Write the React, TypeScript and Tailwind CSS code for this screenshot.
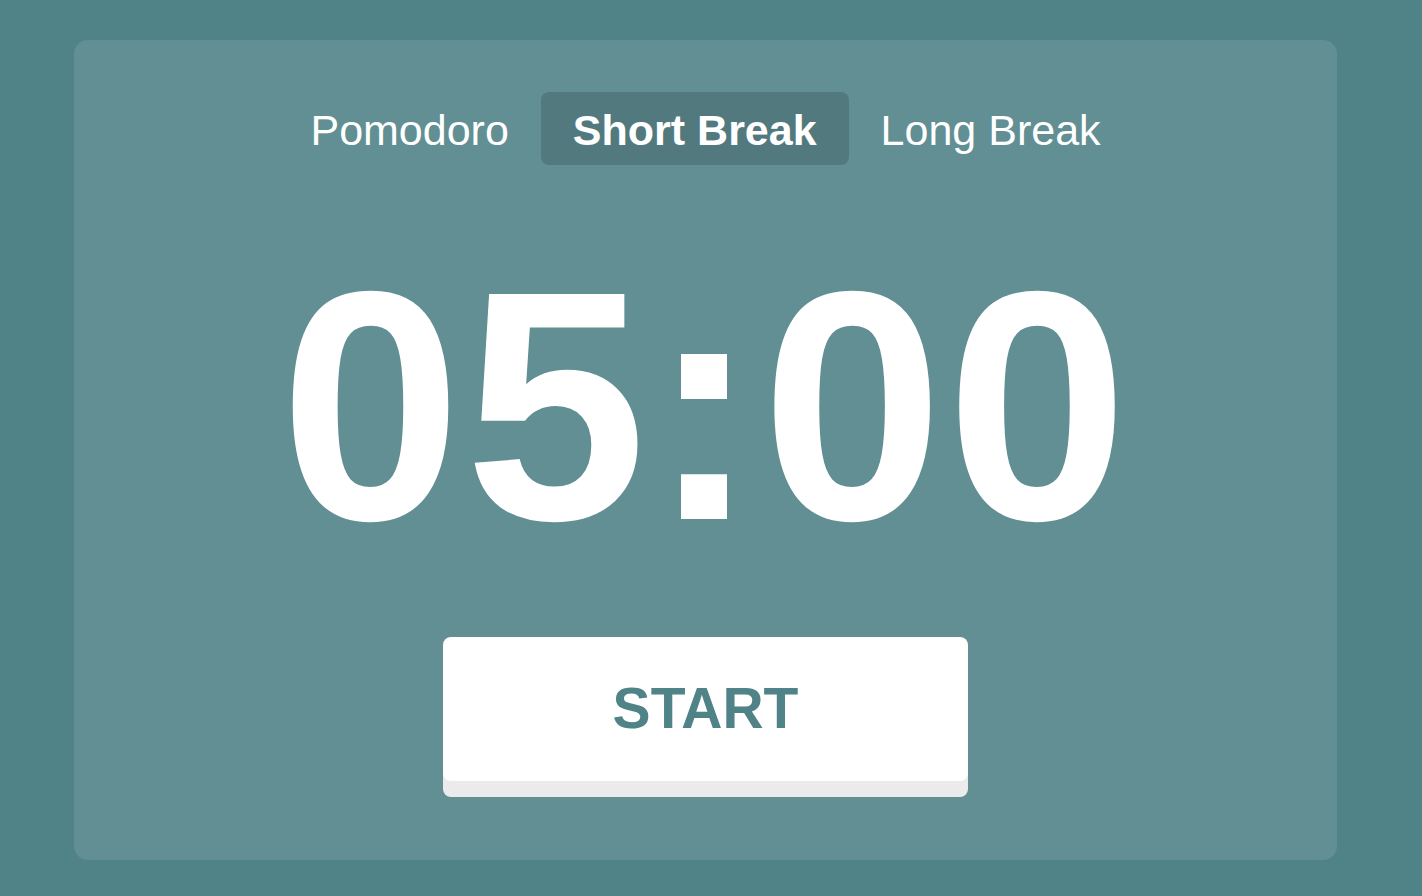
import { useState } from "react";

const tabs = ["Pomodoro", "Short Break", "Long Break"];

export default function App() {
  const [active, setActive] = useState("Short Break");

  return (
    <div className="min-h-screen w-full bg-[#4f8387] pt-[40px] font-['Liberation_Sans',Arial,sans-serif]">
      <div className="ml-[74px] flex h-[820px] w-[1263px] flex-col items-center rounded-[14px] bg-white/10 pt-[52px]">
        <div className="flex items-center">
          {tabs.map((t) => (
            <button
              key={t}
              onClick={() => setActive(t)}
              className={
                "flex h-[73px] items-center rounded-[8px] px-[32px] pt-[3px] text-[43px] text-white " +
                (active === t ? "bg-black/15 font-bold" : "font-normal")
              }
            >
              {t}
            </button>
          ))}
        </div>

        <div className="mt-[77px] text-[327px] font-bold leading-none tracking-[3px] text-white">
          05:00
        </div>

        <button className="mt-[68px] flex h-[144px] w-[525px] items-center justify-center rounded-[8px] bg-white text-[57px] font-bold text-[#4f8387] shadow-[0_16px_0_#ebebeb]">
          START
        </button>
      </div>
    </div>
  );
}
